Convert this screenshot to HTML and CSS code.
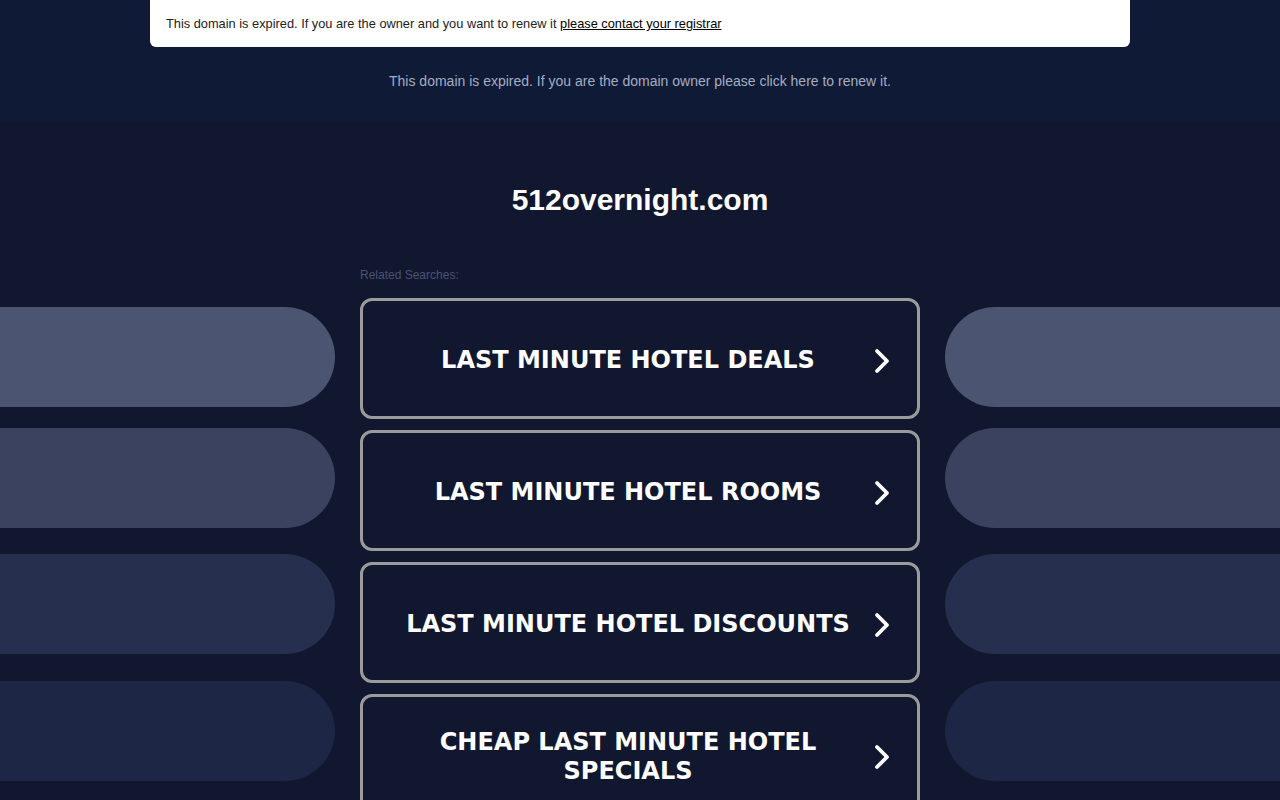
FILE: index.html
```html
<!DOCTYPE html>
<html lang="en">
<head>
<meta charset="utf-8">
<title>512overnight.com</title>
<link rel="stylesheet" href="styles.css">
</head>
<body>
<header class="band">
  <div class="notice">This domain is expired. If you are the owner and you want to renew it <a href="#" class="notice-link">please contact your registrar</a></div>
  <p class="renew">This domain is expired. If you are the domain owner please click here to renew it.</p>
</header>
<main class="main">
  <div class="pills pills-left">
    <div class="pill pill-1"></div>
    <div class="pill pill-2"></div>
    <div class="pill pill-3"></div>
    <div class="pill pill-4"></div>
  </div>
  <div class="center">
    <h1 class="title">512overnight.com</h1>
    <div class="related">Related Searches:</div>
    <div class="links">
      <a href="#" class="link"><span class="link-text">LAST MINUTE HOTEL DEALS</span><svg class="chev" viewBox="0 0 16 26"><path d="M3 3 L13 13 L3 23"/></svg></a>
      <a href="#" class="link"><span class="link-text">LAST MINUTE HOTEL ROOMS</span><svg class="chev" viewBox="0 0 16 26"><path d="M3 3 L13 13 L3 23"/></svg></a>
      <a href="#" class="link"><span class="link-text">LAST MINUTE HOTEL DISCOUNTS</span><svg class="chev" viewBox="0 0 16 26"><path d="M3 3 L13 13 L3 23"/></svg></a>
      <a href="#" class="link"><span class="link-text">CHEAP LAST MINUTE HOTEL SPECIALS</span><svg class="chev" viewBox="0 0 16 26"><path d="M3 3 L13 13 L3 23"/></svg></a>
    </div>
  </div>
  <div class="pills pills-right">
    <div class="pill pill-1"></div>
    <div class="pill pill-2"></div>
    <div class="pill pill-3"></div>
    <div class="pill pill-4"></div>
  </div>
</main>
</body>
</html>
```
FILE: styles.css
```css
html, body {
  margin: 0;
  padding: 0;
  height: 100%;
  overflow: hidden;
}
body {
  background: #11172e;
  font-family: "Liberation Sans", Arial, sans-serif;
}
.band {
  background: #0f1a37;
  height: 123px;
  display: flex;
  flex-direction: column;
  align-items: center;
}
.notice {
  width: 980px;
  height: 47px;
  box-sizing: border-box;
  background: #ffffff;
  border-radius: 0 0 6px 6px;
  padding: 0 16px;
  display: flex;
  align-items: center;
  font-size: 12.8px;
  color: #222222;
  white-space: pre;
}
.notice-link {
  color: #000000;
  text-decoration: underline;
}
.renew {
  margin: 26px 0 0;
  font-size: 14px;
  line-height: 16px;
  color: #a5adc2;
}
.main {
  display: grid;
  grid-template-columns: 1fr 560px 1fr;
  column-gap: 25px;
}
.pills {
  display: flex;
  flex-direction: column;
  padding-top: 184px;
}
.pill {
  height: 100px;
}
.pills-left .pill { border-radius: 0 50px 50px 0; }
.pills-right .pill { border-radius: 50px 0 0 50px; }
.pill-1 { background: #4b5572; }
.pill-2 { background: #3a4260; margin-top: 21px; }
.pill-3 { background: #272f4f; margin-top: 26px; }
.pill-4 { background: #1e2646; margin-top: 27px; }
.center {
  display: flex;
  flex-direction: column;
}
.title {
  margin: 59px 0 0;
  font-size: 30px;
  line-height: 36px;
  font-weight: bold;
  color: #ffffff;
  text-align: center;
}
.related {
  margin-top: 50px;
  font-size: 12px;
  line-height: 14px;
  color: #4b5373;
}
.links {
  margin-top: 16px;
  display: flex;
  flex-direction: column;
  gap: 11px;
}
.link {
  height: 121px;
  box-sizing: border-box;
  border: 3px solid #9b9b9d;
  border-radius: 12px;
  padding: 4px 23px 0;
  display: flex;
  align-items: center;
  text-decoration: none;
  color: #ffffff;
}
.link-text {
  flex: 1;
  text-align: center;
  font-family: "DejaVu Sans", Verdana, sans-serif;
  font-weight: bold;
  font-size: 24px;
  line-height: 29px;
  padding: 0 20px;
}
.chev {
  width: 16px;
  height: 26px;
  margin: 0 4px;
  fill: none;
  stroke: #ffffff;
  stroke-width: 3.8;
  stroke-linecap: round;
  stroke-linejoin: round;
}
```
